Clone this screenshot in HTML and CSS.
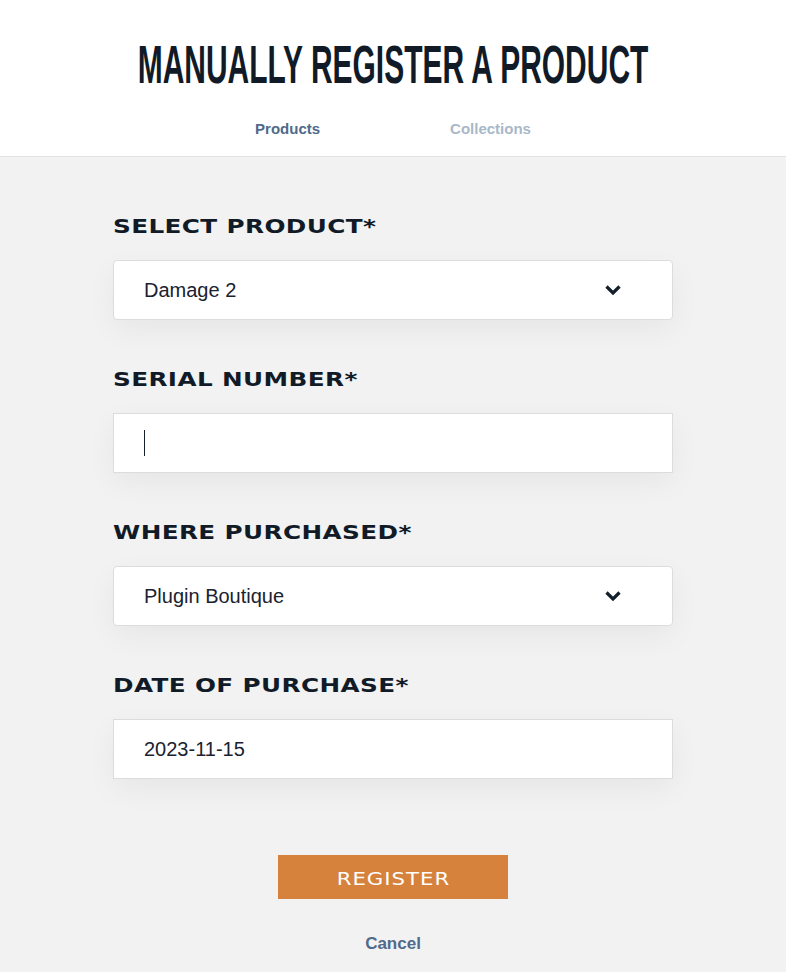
FILE: index.html
```html
<!DOCTYPE html>
<html>
<head>
<meta charset="utf-8">
<link rel="stylesheet" href="styles.css">
</head>
<body>
<header class="header">
  <h1 class="title"><span class="title-inner">MANUALLY REGISTER A PRODUCT</span></h1>
  <nav class="tabs">
    <span class="tab tab-active">Products</span>
    <span class="tab">Collections</span>
  </nav>
</header>
<main class="main">
  <form class="form">
    <div class="field">
      <label class="label">SELECT PRODUCT*</label>
      <div class="control control-select">
        <span class="value">Damage 2</span>
        <svg class="chev" width="18" height="12" viewBox="0 0 18 12"><path d="M2.5 2.5 L9 9 L15.5 2.5" fill="none" stroke="#13202b" stroke-width="3.2"/></svg>
      </div>
    </div>
    <div class="field">
      <label class="label">SERIAL NUMBER*</label>
      <div class="control control-input">
        <span class="caret"></span>
      </div>
    </div>
    <div class="field">
      <label class="label">WHERE PURCHASED*</label>
      <div class="control control-select">
        <span class="value">Plugin Boutique</span>
        <svg class="chev" width="18" height="12" viewBox="0 0 18 12"><path d="M2.5 2.5 L9 9 L15.5 2.5" fill="none" stroke="#13202b" stroke-width="3.2"/></svg>
      </div>
    </div>
    <div class="field">
      <label class="label">DATE OF PURCHASE*</label>
      <div class="control control-input">
        <span class="value">2023-11-15</span>
      </div>
    </div>
    <div class="actions">
      <button type="button" class="btn"><span class="btn-text">REGISTER</span></button>
      <a class="cancel">Cancel</a>
    </div>
  </form>
</main>
</body>
</html>
```
FILE: styles.css
```css
html, body {
  margin: 0;
  padding: 0;
}
body {
  background: #f2f2f2;
  font-family: "Liberation Sans", Arial, sans-serif;
  color: #13202b;
  width: 786px;
  height: 972px;
  overflow: hidden;
}
.header {
  background: #ffffff;
  border-bottom: 1px solid #e2e2e2;
  height: 157px;
  box-sizing: border-box;
  display: flex;
  flex-direction: column;
  align-items: center;
}
.title {
  margin: 0;
  padding-top: 34px;
  height: 60px;
  display: flex;
  justify-content: center;
  width: 100%;
}
.title-inner {
  display: inline-block;
  font-family: "Liberation Sans Narrow", "Liberation Sans", sans-serif;
  font-weight: bold;
  font-size: 54px;
  line-height: 60px;
  color: #111b27;
  transform: scaleX(0.555);
  white-space: nowrap;
}
.tabs {
  display: flex;
  gap: 130px;
  margin-top: 26px;
  font-size: 15px;
  font-weight: bold;
}
.tab {
  color: #a9b8c8;
}
.tab-active {
  color: #4f6a8a;
}
.main {
  display: flex;
  justify-content: center;
}
.form {
  width: 560px;
  padding-top: 59px;
  display: flex;
  flex-direction: column;
  gap: 49px;
}
.field {
  display: flex;
  flex-direction: column;
  align-items: flex-start;
  gap: 24px;
}
.label {
  display: inline-block;
  font-family: "DejaVu Sans", sans-serif;
  font-weight: bold;
  font-size: 19px;
  line-height: 20px;
  letter-spacing: 0.3px;
  color: #111b27;
  transform: scaleX(1.3);
  transform-origin: left center;
  white-space: nowrap;
}
.control {
  align-self: stretch;
  height: 60px;
  box-sizing: border-box;
  background: #fff;
  border: 1px solid #dcdcdc;
  display: flex;
  align-items: center;
  padding: 0 50px 0 30px;
  box-shadow: 0 10px 30px rgba(0,0,0,0.05);
}
.control-select {
  border-radius: 4px;
  justify-content: space-between;
}
.value {
  font-size: 20px;
  color: #1a2230;
}
.caret {
  width: 1px;
  height: 26px;
  background: #13202b;
}
.chev {
  display: block;
}
.actions {
  display: flex;
  flex-direction: column;
  align-items: center;
  margin-top: 27px;
}
.btn {
  width: 230px;
  height: 44px;
  border: none;
  background: #d6823c;
  color: #fff;
  font-family: "DejaVu Sans", sans-serif;
  font-size: 17px;
  padding: 4px 0 0 0;
  box-sizing: border-box;
  display: flex;
  align-items: center;
  justify-content: center;
}
.btn-text {
  display: inline-block;
  letter-spacing: 0.8px;
  transform: scaleX(1.25);
  font-weight: normal;
}
.cancel {
  margin-top: 35px;
  font-size: 17px;
  font-weight: bold;
  color: #4f6a8a;
}
```
